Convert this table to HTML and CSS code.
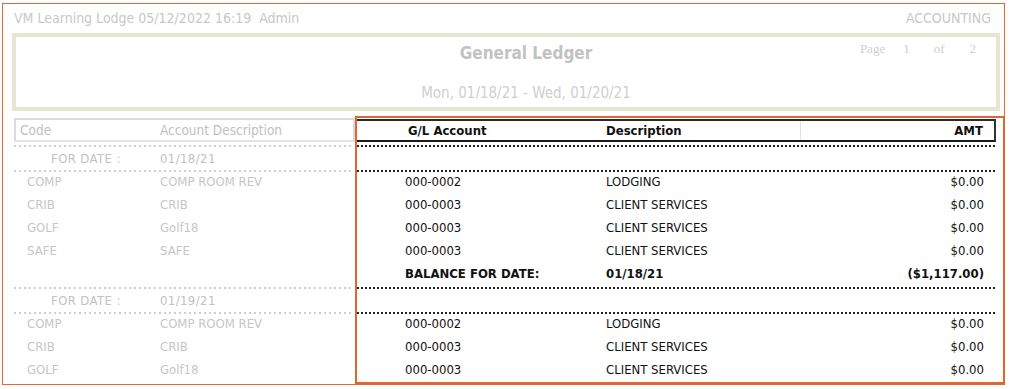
FILE: index.html
```html
<!DOCTYPE html>
<html>
<head>
<meta charset="utf-8">
<title>General Ledger</title>
<link rel="stylesheet" href="styles.css">
</head>
<body>
<div class="page">
  <div class="topbar">
    <span>VM Learning Lodge 05/12/2022 16:19&nbsp; Admin</span>
    <span>ACCOUNTING</span>
  </div>
  <div class="report-head">
    <div class="title">General Ledger</div>
    <div class="pager"><span class="pg-word">Page</span><span class="pg-n1">1</span><span class="pg-of">of</span><span class="pg-n2">2</span></div>
    <div class="range">Mon, 01/18/21 - Wed, 01/20/21</div>
  </div>
  <div class="ledger">
    <div class="left">
      <div class="lhead"><span>Code</span><span>Account Description</span></div>
      <div class="dots light"></div>
      <div class="ldate"><span>FOR DATE :</span><span>01/18/21</span></div>
      <div class="dots light"></div>
      <div class="lrow"><span>COMP</span><span>COMP ROOM REV</span></div>
      <div class="lrow"><span>CRIB</span><span>CRIB</span></div>
      <div class="lrow"><span>GOLF</span><span>Golf18</span></div>
      <div class="lrow"><span>SAFE</span><span>SAFE</span></div>
      <div class="lrow"></div>
      <div class="dots light"></div>
      <div class="ldate"><span>FOR DATE :</span><span>01/19/21</span></div>
      <div class="dots light"></div>
      <div class="lrow"><span>COMP</span><span>COMP ROOM REV</span></div>
      <div class="lrow"><span>CRIB</span><span>CRIB</span></div>
      <div class="lrow"><span>GOLF</span><span>Golf18</span></div>
    </div>
    <div class="right">
      <div class="rin">
        <div class="rhead"><span>G/L Account</span><span>Description</span><span class="amt">AMT</span></div>
        <div class="dots dark"></div>
        <div class="rblank"></div>
        <div class="dots dark"></div>
        <div class="rrow"><span>000-0002</span><span>LODGING</span><span class="amt">$0.00</span></div>
        <div class="rrow"><span>000-0003</span><span>CLIENT SERVICES</span><span class="amt">$0.00</span></div>
        <div class="rrow"><span>000-0003</span><span>CLIENT SERVICES</span><span class="amt">$0.00</span></div>
        <div class="rrow"><span>000-0003</span><span>CLIENT SERVICES</span><span class="amt">$0.00</span></div>
        <div class="rrow total"><span>BALANCE FOR DATE:</span><span>01/18/21</span><span class="amt">($1,117.00)</span></div>
        <div class="dots dark"></div>
        <div class="rblank"></div>
        <div class="dots dark"></div>
        <div class="rrow"><span>000-0002</span><span>LODGING</span><span class="amt">$0.00</span></div>
        <div class="rrow"><span>000-0003</span><span>CLIENT SERVICES</span><span class="amt">$0.00</span></div>
        <div class="rrow"><span>000-0003</span><span>CLIENT SERVICES</span><span class="amt">$0.00</span></div>
      </div>
    </div>
  </div>
</div>
</body>
</html>
```
FILE: styles.css
```css
* { box-sizing: border-box; }
body {
  margin: 0;
  background: #fff;
  font-family: "DejaVu Sans Condensed", "DejaVu Sans", sans-serif;
  font-stretch: condensed;
}
.page {
  margin: 3px 0 0 2px;
  width: 1003px;
  height: 382px;
  border: 1px solid #e0693a;
  display: flex;
  flex-direction: column;
}
.topbar {
  height: 29px;
  flex: none;
  display: flex;
  justify-content: space-between;
  align-items: center;
  padding: 0 13px 2px 11px;
  color: #c8c8c8;
  font-size: 14px;
}
.report-head {
  flex: none;
  margin-left: 9px;
  width: 988px;
  height: 78px;
  border: 4px solid #e6e6d4;
  display: grid;
  grid-template-columns: 1fr auto 1fr;
  grid-template-rows: auto auto;
  padding: 0 20px 0 60px;
}
.title {
  grid-column: 2;
  grid-row: 1;
  margin-top: 5px;
  font-size: 17px;
  font-weight: bold;
  line-height: 22px;
  color: #c2c2c2;
  text-align: center;
}
.pager {
  grid-column: 3;
  grid-row: 1;
  justify-self: end;
  margin-top: 4px;
  font-family: "Liberation Serif", serif;
  font-size: 13px;
  color: #d0d0d0;
  display: flex;
}
.pg-n1 { margin-left: 18px; }
.pg-of { margin-left: 24px; }
.pg-n2 { margin-left: 25px; }
.range {
  grid-column: 1 / 4;
  grid-row: 2;
  text-align: center;
  margin-top: 15px;
  font-size: 15px;
  line-height: 18px;
  color: #cfcfcf;
}
.ledger {
  flex: 1;
  min-height: 0;
  display: flex;
  margin-top: 5px;
}
.left {
  flex: none;
  width: 341px;
  margin-left: 11px;
  color: #c6c6c6;
  font-size: 13px;
}
.lhead {
  margin-top: 2px;
  height: 24px;
  border: 2px solid #dadada;
  border-bottom-color: #e4e4e4;
  display: grid;
  grid-template-columns: 140px 1fr;
  align-items: center;
  padding-left: 4px;
  font-size: 13.5px;
  color: #bfbfbf;
}
.dots {
  height: 2px;
  margin-top: 3px;
}
.ldate + .dots, .lrow + .dots, .rblank + .dots, .rrow + .dots { margin-top: 0; }
.dots.light {
  background: repeating-linear-gradient(to right, #cfcfcf 0 2px, transparent 2px 5px);
  margin-right: 3px;
}
.dots.dark {
  background: repeating-linear-gradient(to right, #222 0 2px, transparent 2px 4px);
}
.ldate {
  height: 23px;
  display: grid;
  grid-template-columns: 109px 1fr;
  align-items: center;
  padding: 0 0 1px 37px;
  color: #c2c2c2;
  letter-spacing: 0.4px;
}
.lrow {
  height: 23px;
  display: grid;
  grid-template-columns: 133px 1fr;
  align-items: center;
  padding: 0 0 4px 13px;
}
.right {
  flex: none;
  width: 650px;
  margin-right: -2px;
  border: 2px solid #e0662f;
  overflow: hidden;
  color: #111;
  font-size: 13px;
}
.rin { margin-right: 7px; }
.rhead {
  margin-top: 1px;
  height: 23px;
  border-top: 2px solid #2a2a2a;
  border-bottom: 2px solid #1a1a1a;
  border-right: 2px solid #333;
  display: grid;
  grid-template-columns: 198px 194px 1fr;
  align-items: center;
  padding-left: 51px;
  font-weight: bold;
}
.rhead .amt {
  border-left: 1px solid #e2e2e2;
  align-self: stretch;
  display: flex;
  align-items: center;
  justify-content: flex-end;
  padding-right: 11px;
}
.rblank { height: 23px; }
.rrow {
  height: 23px;
  display: grid;
  grid-template-columns: 201px 194px 1fr;
  align-items: center;
  padding: 0 0 4px 48px;
}
.rrow .amt {
  text-align: right;
  padding-right: 12px;
}
.rrow.total { font-weight: bold; }
```
